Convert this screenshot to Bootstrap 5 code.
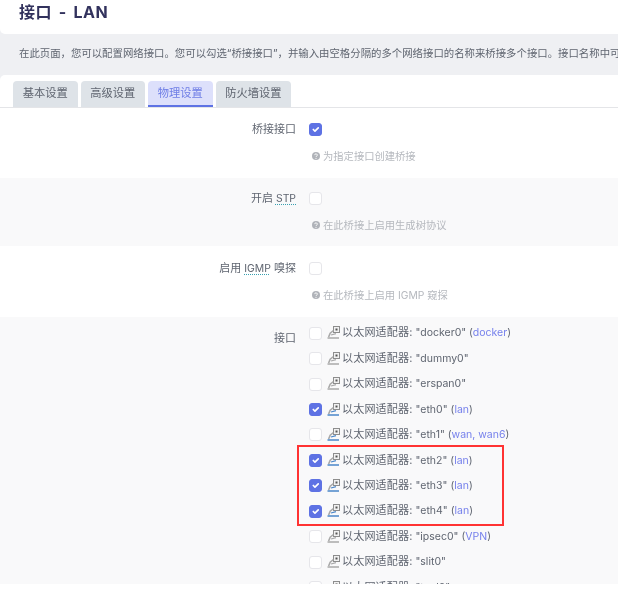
<!DOCTYPE html>
<html lang="zh-CN">
<head>
<meta charset="utf-8">
<title>接口 - LAN</title>
<link href="https://cdn.jsdelivr.net/npm/bootstrap@5.3.0/dist/css/bootstrap.min.css" rel="stylesheet">
<style>
html, body { margin: 0; background: #fff; overflow: hidden; }
body { font-family: Inter, "Noto Sans CJK SC", sans-serif; color: #5a5f69; font-size: 11px; }
.page-clip { position: relative; height: 584px; overflow: hidden; background: #eff0f3; }
.soft { filter: blur(.3px); }
.head-bar { height: 34px; background: #fff; border-bottom-left-radius: 5px; padding-left: 19px; }
.head-bar h2 { font-size: 16px; line-height: 24px; font-weight: 700; margin: 0; color: #32325d; letter-spacing: .5px; word-spacing: 2.5px; white-space: nowrap; }
.intro { height: 41px; padding-left: 19px; line-height: 40px; font-size: 10.4px; color: #5f6570; white-space: nowrap; overflow: hidden; }
.sheet { background: #fff; border-top-left-radius: 5px; height: 509px; }
.tab-strip { height: 33px; padding: 6px 0 0 13px; gap: 3px; border-bottom: 1px solid #e4e5e8; flex-wrap: nowrap; }
.tab-strip .nav-link { height: 26px; padding: 0 9.75px; line-height: 24px; font-size: 11.25px; color: #5f6570; background: #dee3e8; border: 0; border-radius: 4px 4px 0 0; white-space: nowrap; }
.tab-strip .nav-link.active { color: #6f7ee6; background: #dde0fb; border-bottom: 2px solid #5e72e4; }
.opt-row { margin: 0; }
.opt-alt { background: #f9f9fa; }
.opt-a { height: 70px; padding-top: 14px; }
.opt-b { height: 68px; padding-top: 13px; }
.opt-c { height: 71px; padding-top: 15px; }
.opt-d { height: 267px; padding-top: 3px; }
.opt-label { text-align: right; padding-right: 13px; color: #5f6570; line-height: 15px; white-space: nowrap; }
.opt-d .opt-label { padding-top: 11px; }
.opt-label abbr { font-size: 10.4px; text-decoration: underline dotted #3aa0b0; text-underline-offset: 2px; cursor: help; }
.tick.form-check-input { width: 13px; height: 13px; margin: 1px 0 0; border: 1px solid #e6e6ea; border-radius: 3px; background-color: #fff; flex: none; float: none; display: block; }
.tick.form-check-input:checked { background-color: #5e72e4; border-color: #5e72e4; }
.hint { margin-top: 13px; margin-left: 3px; font-size: 10.3px; line-height: 14px; color: #b5b8be; display: flex; align-items: center; gap: 3px; white-space: nowrap; }
.hint svg { width: 8px; height: 8px; flex: none; }
.nic-row { height: 25.45px; color: #5f6570; white-space: nowrap; font-size: 10.5px; }
.nic-row .tick { margin: 1px 5px 0 0; }
.nic-row svg { width: 13px; height: 13px; flex: none; margin-right: 2px; }
.nic-name { font-size: 11.1px; letter-spacing: .1px; }
.zone { color: #7681ec; }
.mark-box { position: absolute; left: 297px; top: 445px; width: 207px; height: 81px; border: 2px solid #f33; pointer-events: none; }
</style>
</head>
<body>
<svg width="0" height="0" class="d-block" style="position:absolute">
  <defs>
    <g id="nic">
      <rect x="6.5" y="0.5" width="6" height="6" fill="#f1f1f1" stroke="#8d8d8d"/>
      <rect x="8.5" y="2.5" width="2" height="2" fill="#555"/>
      <path d="M6.5 4.5 L3.2 7.2 L1.6 11" fill="none" stroke="#a9a9a9" stroke-width="1.6"/>
      <path d="M4 9 L9 7.6" stroke="currentColor" stroke-width="1.2"/>
      <path d="M.5 12 H12" stroke="currentColor" stroke-width="1.5"/>
    </g>
    <g id="qm">
      <circle cx="8" cy="8" r="8" fill="#b0b3b9"/>
      <path d="M5.4 6.2a2.6 2.4 0 1 1 3.8 2.1c-.8.5-1.2.9-1.2 1.7" fill="none" stroke="#fff" stroke-width="1.9"/>
      <circle cx="8" cy="12.6" r="1.2" fill="#fff"/>
    </g>
  </defs>
</svg>
<div class="page-clip">
  <div class="soft">
  <div class="head-bar"><h2>接口 - LAN</h2></div>
  <div class="intro">在此页面，您可以配置网络接口。您可以勾选“桥接接口”，并输入由空格分隔的多个网络接口的名称来桥接多个接口。接口名称中可以使用 VLAN 记法</div>
  <div class="sheet">
    <ul class="nav tab-strip">
      <li class="nav-item"><a class="nav-link" href="#">基本设置</a></li>
      <li class="nav-item"><a class="nav-link" href="#">高级设置</a></li>
      <li class="nav-item"><a class="nav-link active" href="#">物理设置</a></li>
      <li class="nav-item"><a class="nav-link" href="#">防火墙设置</a></li>
    </ul>

    <div class="row g-0 opt-row opt-a">
      <div class="col-6 opt-label">桥接接口</div>
      <div class="col-6">
        <input class="form-check-input tick" type="checkbox" checked>
        <div class="hint"><svg viewBox="0 0 16 16"><use href="#qm"/></svg>为指定接口创建桥接</div>
      </div>
    </div>

    <div class="row g-0 opt-row opt-alt opt-b">
      <div class="col-6 opt-label">开启 <abbr>STP</abbr></div>
      <div class="col-6">
        <input class="form-check-input tick" type="checkbox">
        <div class="hint"><svg viewBox="0 0 16 16"><use href="#qm"/></svg>在此桥接上启用生成树协议</div>
      </div>
    </div>

    <div class="row g-0 opt-row opt-c">
      <div class="col-6 opt-label">启用 <abbr>IGMP</abbr> 嗅探</div>
      <div class="col-6">
        <input class="form-check-input tick" type="checkbox">
        <div class="hint"><svg viewBox="0 0 16 16"><use href="#qm"/></svg>在此桥接上启用 IGMP 窥探</div>
      </div>
    </div>

    <div class="row g-0 opt-row opt-alt opt-d">
      <div class="col-6 opt-label">接口</div>
      <div class="col-6">
        <div class="d-flex align-items-center nic-row"><input class="form-check-input tick" type="checkbox"><svg viewBox="0 0 13 13" color="#a9a9a9"><use href="#nic"/></svg><span><span class="nic-name">以太网适配器:</span> "docker0" (<span class="zone">docker</span>)</span></div>
        <div class="d-flex align-items-center nic-row"><input class="form-check-input tick" type="checkbox"><svg viewBox="0 0 13 13" color="#a9a9a9"><use href="#nic"/></svg><span><span class="nic-name">以太网适配器:</span> "dummy0"</span></div>
        <div class="d-flex align-items-center nic-row"><input class="form-check-input tick" type="checkbox"><svg viewBox="0 0 13 13" color="#a9a9a9"><use href="#nic"/></svg><span><span class="nic-name">以太网适配器:</span> "erspan0"</span></div>
        <div class="d-flex align-items-center nic-row"><input class="form-check-input tick" type="checkbox" checked><svg viewBox="0 0 13 13" color="#4a86c8"><use href="#nic"/></svg><span><span class="nic-name">以太网适配器:</span> "eth0" (<span class="zone">lan</span>)</span></div>
        <div class="d-flex align-items-center nic-row"><input class="form-check-input tick" type="checkbox"><svg viewBox="0 0 13 13" color="#4a86c8"><use href="#nic"/></svg><span><span class="nic-name">以太网适配器:</span> "eth1" (<span class="zone">wan, wan6</span>)</span></div>
        <div class="d-flex align-items-center nic-row"><input class="form-check-input tick" type="checkbox" checked><svg viewBox="0 0 13 13" color="#4a86c8"><use href="#nic"/></svg><span><span class="nic-name">以太网适配器:</span> "eth2" (<span class="zone">lan</span>)</span></div>
        <div class="d-flex align-items-center nic-row"><input class="form-check-input tick" type="checkbox" checked><svg viewBox="0 0 13 13" color="#4a86c8"><use href="#nic"/></svg><span><span class="nic-name">以太网适配器:</span> "eth3" (<span class="zone">lan</span>)</span></div>
        <div class="d-flex align-items-center nic-row"><input class="form-check-input tick" type="checkbox" checked><svg viewBox="0 0 13 13" color="#4a86c8"><use href="#nic"/></svg><span><span class="nic-name">以太网适配器:</span> "eth4" (<span class="zone">lan</span>)</span></div>
        <div class="d-flex align-items-center nic-row"><input class="form-check-input tick" type="checkbox"><svg viewBox="0 0 13 13" color="#a9a9a9"><use href="#nic"/></svg><span><span class="nic-name">以太网适配器:</span> "ipsec0" (<span class="zone">VPN</span>)</span></div>
        <div class="d-flex align-items-center nic-row"><input class="form-check-input tick" type="checkbox"><svg viewBox="0 0 13 13" color="#a9a9a9"><use href="#nic"/></svg><span><span class="nic-name">以太网适配器:</span> "slit0"</span></div>
        <div class="d-flex align-items-center nic-row"><input class="form-check-input tick" type="checkbox"><svg viewBox="0 0 13 13" color="#a9a9a9"><use href="#nic"/></svg><span><span class="nic-name">以太网适配器:</span> "tunl0"</span></div>
      </div>
    </div>
  </div>
  </div>
  <div class="mark-box"></div>
</div>
</body>
</html>
